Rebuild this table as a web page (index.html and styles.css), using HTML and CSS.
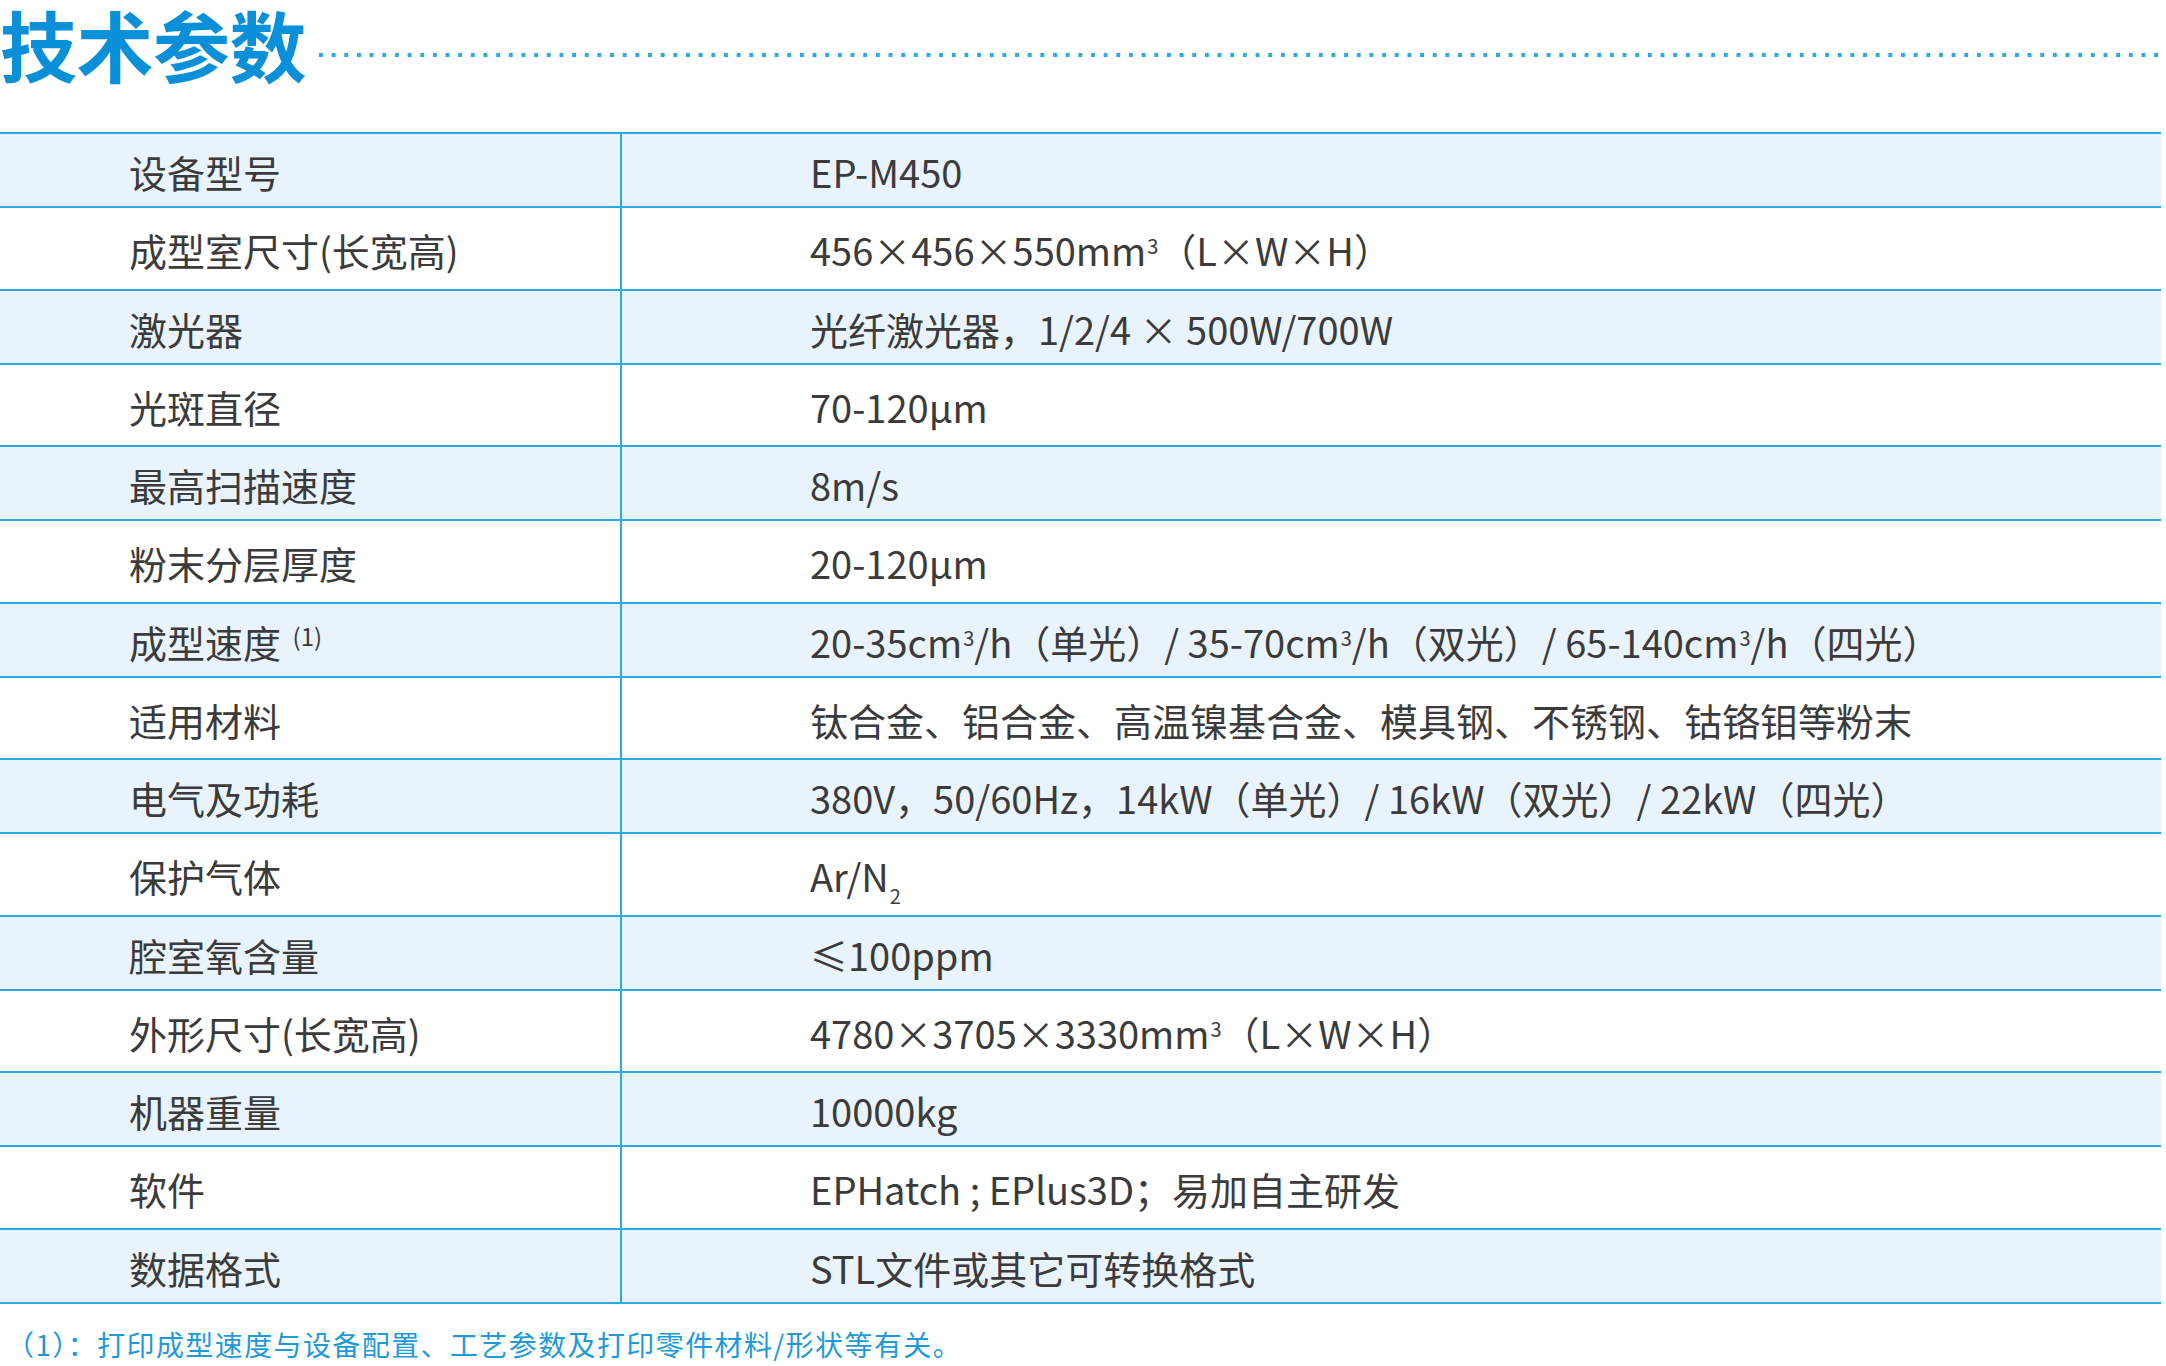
FILE: index.html
```html
<!DOCTYPE html>
<html lang="zh-CN">
<head>
<meta charset="utf-8">
<title>技术参数</title>
<link rel="stylesheet" href="styles.css">
</head>
<body>
<div class="page">
  <header class="title-bar">
    <h1 class="title">技术参数</h1>
    <div class="dots"></div>
  </header>
  <div class="spec">
    <div class="row shade"><div class="k"><span>设备型号</span></div><div class="v"><span>EP-M450</span></div></div>
    <div class="row"><div class="k"><span>成型室尺寸(长宽高)</span></div><div class="v"><span>456×456×550mm<span class="sup">3</span>（L×W×H）</span></div></div>
    <div class="row shade"><div class="k"><span>激光器</span></div><div class="v"><span>光纤激光器，1/2/4 × 500W/700W</span></div></div>
    <div class="row"><div class="k"><span>光斑直径</span></div><div class="v"><span>70-120μm</span></div></div>
    <div class="row shade"><div class="k"><span>最高扫描速度</span></div><div class="v"><span>8m/s</span></div></div>
    <div class="row"><div class="k"><span>粉末分层厚度</span></div><div class="v"><span>20-120μm</span></div></div>
    <div class="row shade"><div class="k"><span>成型速度 <span class="note">(1)</span></span></div><div class="v"><span>20-35cm<span class="sup">3</span>/h（单光）/ 35-70cm<span class="sup">3</span>/h（双光）/ 65-140cm<span class="sup">3</span>/h（四光）</span></div></div>
    <div class="row"><div class="k"><span>适用材料</span></div><div class="v"><span>钛合金、铝合金、高温镍基合金、模具钢、不锈钢、钴铬钼等粉末</span></div></div>
    <div class="row shade"><div class="k"><span>电气及功耗</span></div><div class="v"><span>380V，50/60Hz，14kW（单光）/ 16kW（双光）/ 22kW（四光）</span></div></div>
    <div class="row"><div class="k"><span>保护气体</span></div><div class="v"><span>Ar/N<span class="sub">2</span></span></div></div>
    <div class="row shade"><div class="k"><span>腔室氧含量</span></div><div class="v"><span>≤100ppm</span></div></div>
    <div class="row"><div class="k"><span>外形尺寸(长宽高)</span></div><div class="v"><span>4780×3705×3330mm<span class="sup">3</span>（L×W×H）</span></div></div>
    <div class="row shade"><div class="k"><span>机器重量</span></div><div class="v"><span>10000kg</span></div></div>
    <div class="row"><div class="k"><span>软件</span></div><div class="v"><span>EPHatch ; EPlus3D；易加自主研发</span></div></div>
    <div class="row shade last"><div class="k"><span>数据格式</span></div><div class="v"><span>STL文件或其它可转换格式</span></div></div>
  </div>
  <p class="footnote">（1）：打印成型速度与设备配置、工艺参数及打印零件材料/形状等有关。</p>
</div>
</body>
</html>
```

FILE: styles.css
```css
html, body {
  margin: 0;
  padding: 0;
  background: #ffffff;
}

.page {
  width: 2166px;
  font-family: "Noto Sans CJK SC", "Noto Sans", sans-serif;
}

.title-bar {
  display: flex;
  align-items: flex-start;
  height: 132px;
}

.title {
  margin: 5px 0 0 0;
  font-size: 77px;
  line-height: 77px;
  font-weight: 700;
  color: #0a90d8;
  letter-spacing: -0.5px;
  white-space: nowrap;
}

.dots {
  flex: 1;
  height: 4px;
  margin: 53px 5px 0 13px;
  background-image: linear-gradient(to right, #2aaae2 4px, transparent 4px);
  background-size: 12.67px 4px;
  background-repeat: repeat-x;
}

.spec {
  width: 2161px;
}

.row {
  display: grid;
  grid-template-columns: 620px 1fr;
  height: 80.5px;
  border-top: 2px solid #2aaae2;
  color: #3b3b3b;
  font-size: 38px;
}

.row.shade {
  height: 72px;
  background: #e8f3fc;
}

.row.last {
  border-bottom: 2px solid #2aaae2;
}

.k, .v {
  display: flex;
  align-items: center;
  padding-top: 3px;
  white-space: nowrap;
}

.k {
  padding-left: 129px;
}

.v {
  border-left: 2px solid #2aaae2;
  padding-left: 188px;
}

.sup {
  font-size: 20px;
  line-height: 0;
  vertical-align: 12px;
  margin-left: 1px;
}

.note {
  font-size: 24px;
  line-height: 0;
  vertical-align: 12px;
  margin-left: 3px;
}

.sub {
  font-size: 20px;
  line-height: 0;
  vertical-align: -12px;
  margin-left: 1px;
}

.footnote {
  margin: 22px 0 0 6px;
  font-size: 28px;
  line-height: 36px;
  letter-spacing: 1.4px;
  color: #1e9ad8;
  white-space: nowrap;
}
```
